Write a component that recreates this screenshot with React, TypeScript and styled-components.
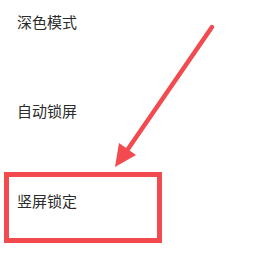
import styled, { createGlobalStyle } from "styled-components";

const GlobalStyle = createGlobalStyle`
  html, body {
    margin: 0;
    padding: 0;
    background: #ffffff;
  }
  * {
    box-sizing: border-box;
  }
`;

const items = [
  { label: "深色模式", gap: 0, marked: false },
  { label: "自动锁屏", gap: 45, marked: false },
  { label: "竖屏锁定", gap: 39, marked: true },
];

export default function App() {
  return (
    <>
      <GlobalStyle />
      <Page>
        <List>
          {items.map((item) => (
            <Row key={item.label} $gap={item.gap} $marked={item.marked}>
              <Label>{item.label}</Label>
            </Row>
          ))}
        </List>
        <Arrow viewBox="0 0 279 254" width="279" height="254">
          <line
            x1="212"
            y1="27"
            x2="128"
            y2="149"
            stroke="#f24a4f"
            strokeWidth="4.5"
            strokeLinecap="round"
          />
          <polygon points="115,167 119,143 136,155" fill="#f24a4f" />
        </Arrow>
      </Page>
    </>
  );
}

const Page = styled.div`
  position: relative;
  width: 279px;
  height: 254px;
  overflow: hidden;
  background: #ffffff;
`;

const List = styled.div`
  display: flex;
  flex-direction: column;
`;

const Row = styled.div<{ $gap: number; $marked: boolean }>`
  display: flex;
  margin-top: ${(p) => p.$gap}px;
  align-items: ${(p) => (p.$marked ? "flex-start" : "center")};
  height: ${(p) => (p.$marked ? "71px" : "44px")};
  width: ${(p) => (p.$marked ? "158px" : "auto")};
  margin-left: ${(p) => (p.$marked ? "4px" : "0")};
  padding-left: ${(p) => (p.$marked ? "8px" : "17px")};
  padding-top: ${(p) => (p.$marked ? "14px" : "0")};
  border: ${(p) => (p.$marked ? "5.5px solid #f24a4f" : "none")};
`;

const Label = styled.span`
  font-family: "Noto Sans CJK SC", "Noto Sans", sans-serif;
  font-size: 15px;
  line-height: 20px;
  color: #2b2b2b;
`;

const Arrow = styled.svg`
  position: absolute;
  left: 0;
  top: 0;
  pointer-events: none;
`;
